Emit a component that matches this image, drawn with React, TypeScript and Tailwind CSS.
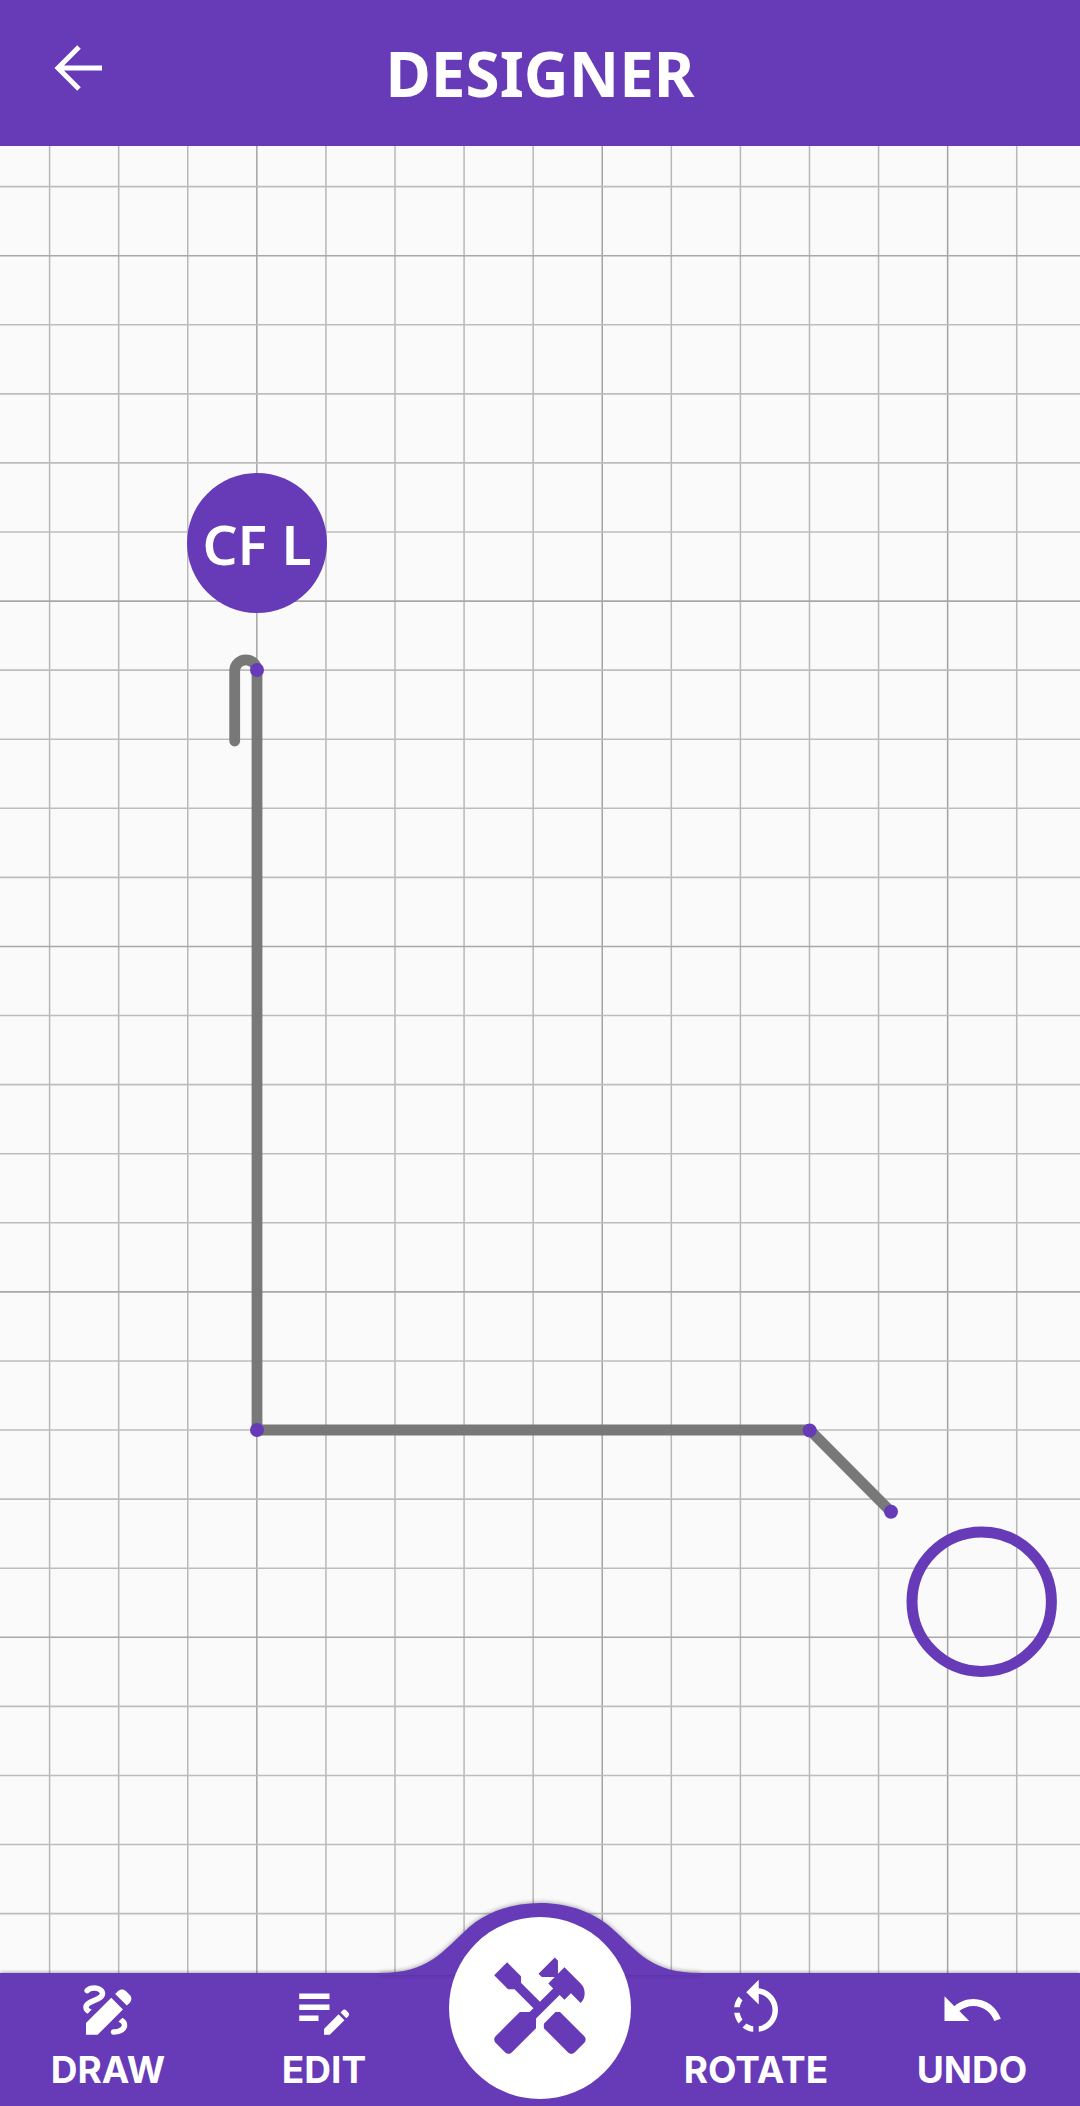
import React from 'react';
import { MdDraw, MdEditNote, MdHandyman, MdRotateLeft, MdUndo } from 'react-icons/md';

const CELL = 69.08;
const verticals = Array.from({ length: 15 }, (_, i) => 49.6 + i * CELL);
const horizontals = Array.from({ length: 27 }, (_, i) => 40.6 + i * CELL);

const NavItem: React.FC<{ icon: React.ReactNode; label: string }> = ({ icon, label }) => (
  <div className="flex flex-col items-center">
    {icon}
    <span className="mt-[7px] font-['Inter',sans-serif] text-[37px] leading-[40px] font-bold text-white">{label}</span>
  </div>
);

const GridCanvas: React.FC = () => (
  <svg className="absolute inset-0 h-full w-full" viewBox="0 0 1080 1827">
    {verticals.map((x, i) => (
      <line key={x} x1={x} y1={0} x2={x} y2={1827} stroke={i % 5 === 3 ? '#a3a3a3' : '#b8b8b8'} strokeWidth={1.5} />
    ))}
    {horizontals.map((y, i) => (
      <line key={y} x1={0} y1={y} x2={1080} y2={y} stroke={i % 5 === 1 ? '#a8a8a8' : '#bdbdbd'} strokeWidth={1.6} />
    ))}
    {/* shape drawn by the user */}
    <path
      d="M234.7 595V524a11.2 11.2 0 0 1 22.3 0V1284H809.7L891 1365.7"
      fill="none"
      stroke="#787878"
      strokeWidth={10.8}
      strokeLinecap="round"
      strokeLinejoin="round"
    />
    <circle cx={257} cy={524} r={7} fill="#673ab7" />
    <circle cx={257} cy={1284} r={7} fill="#673ab7" />
    <circle cx={809.7} cy={1284.5} r={7} fill="#673ab7" />
    <circle cx={891} cy={1365.7} r={7} fill="#673ab7" />
    <circle cx={981.7} cy={1455.7} r={69.7} fill="none" stroke="#673ab7" strokeWidth={11} />
  </svg>
);

export default function App() {
  return (
    <div className="flex h-[2106px] w-[1080px] flex-col overflow-hidden bg-[#fafafa]">
      <header className="relative flex h-[146px] shrink-0 items-center justify-center bg-[#673ab7]">
        <svg className="absolute left-[54px] top-[44px] h-[48px] w-[50px]" viewBox="0 0 50 48" fill="none">
          <path d="M48 24H5M25 3 4 24l0 0 21 21" stroke="#fff" strokeWidth={5} strokeLinejoin="miter" />
        </svg>
        <h1 className="font-['Noto_Sans',sans-serif] text-[62px] leading-none font-bold text-white">DESIGNER</h1>
      </header>

      <main className="relative flex-1">
        <GridCanvas />
        <div className="absolute left-[187px] top-[327px] flex h-[140px] w-[140px] items-center justify-center rounded-full bg-[#673ab7]">
          <span className="font-['Noto_Sans',sans-serif] text-[55px] leading-none font-semibold whitespace-pre text-white">CF L</span>
        </div>
      </main>

      <nav className="relative grid h-[133px] shrink-0 grid-cols-5 bg-[#673ab7] pt-[4px] shadow-[0_-1px_3px_rgba(0,0,0,0.3)]">
        <svg
          className="absolute left-[380px] top-[-71px] h-[73px] w-[320px] drop-shadow-[0_-1px_2px_rgba(0,0,0,0.3)]"
          viewBox="0 0 320 73"
        >
          <path d="M0 71C48 71 62 50 84 30 104 10 132 1 160 1s56 9 76 29c22 20 36 41 84 41v2H0Z" fill="#673ab7" />
        </svg>
        <NavItem icon={<MdDraw className="text-[66px] text-white" />} label="DRAW" />
        <NavItem icon={<MdEditNote className="text-[66px] text-white" />} label="EDIT" />
        <div />
        <NavItem icon={<MdRotateLeft className="text-[66px] text-white" />} label="ROTATE" />
        <NavItem icon={<MdUndo className="text-[66px] text-white" />} label="UNDO" />
        <button className="absolute left-[449px] top-[-56px] flex h-[182px] w-[182px] items-center justify-center rounded-full bg-white">
          <MdHandyman className="text-[110px] text-[#673ab7]" />
        </button>
      </nav>
    </div>
  );
}
